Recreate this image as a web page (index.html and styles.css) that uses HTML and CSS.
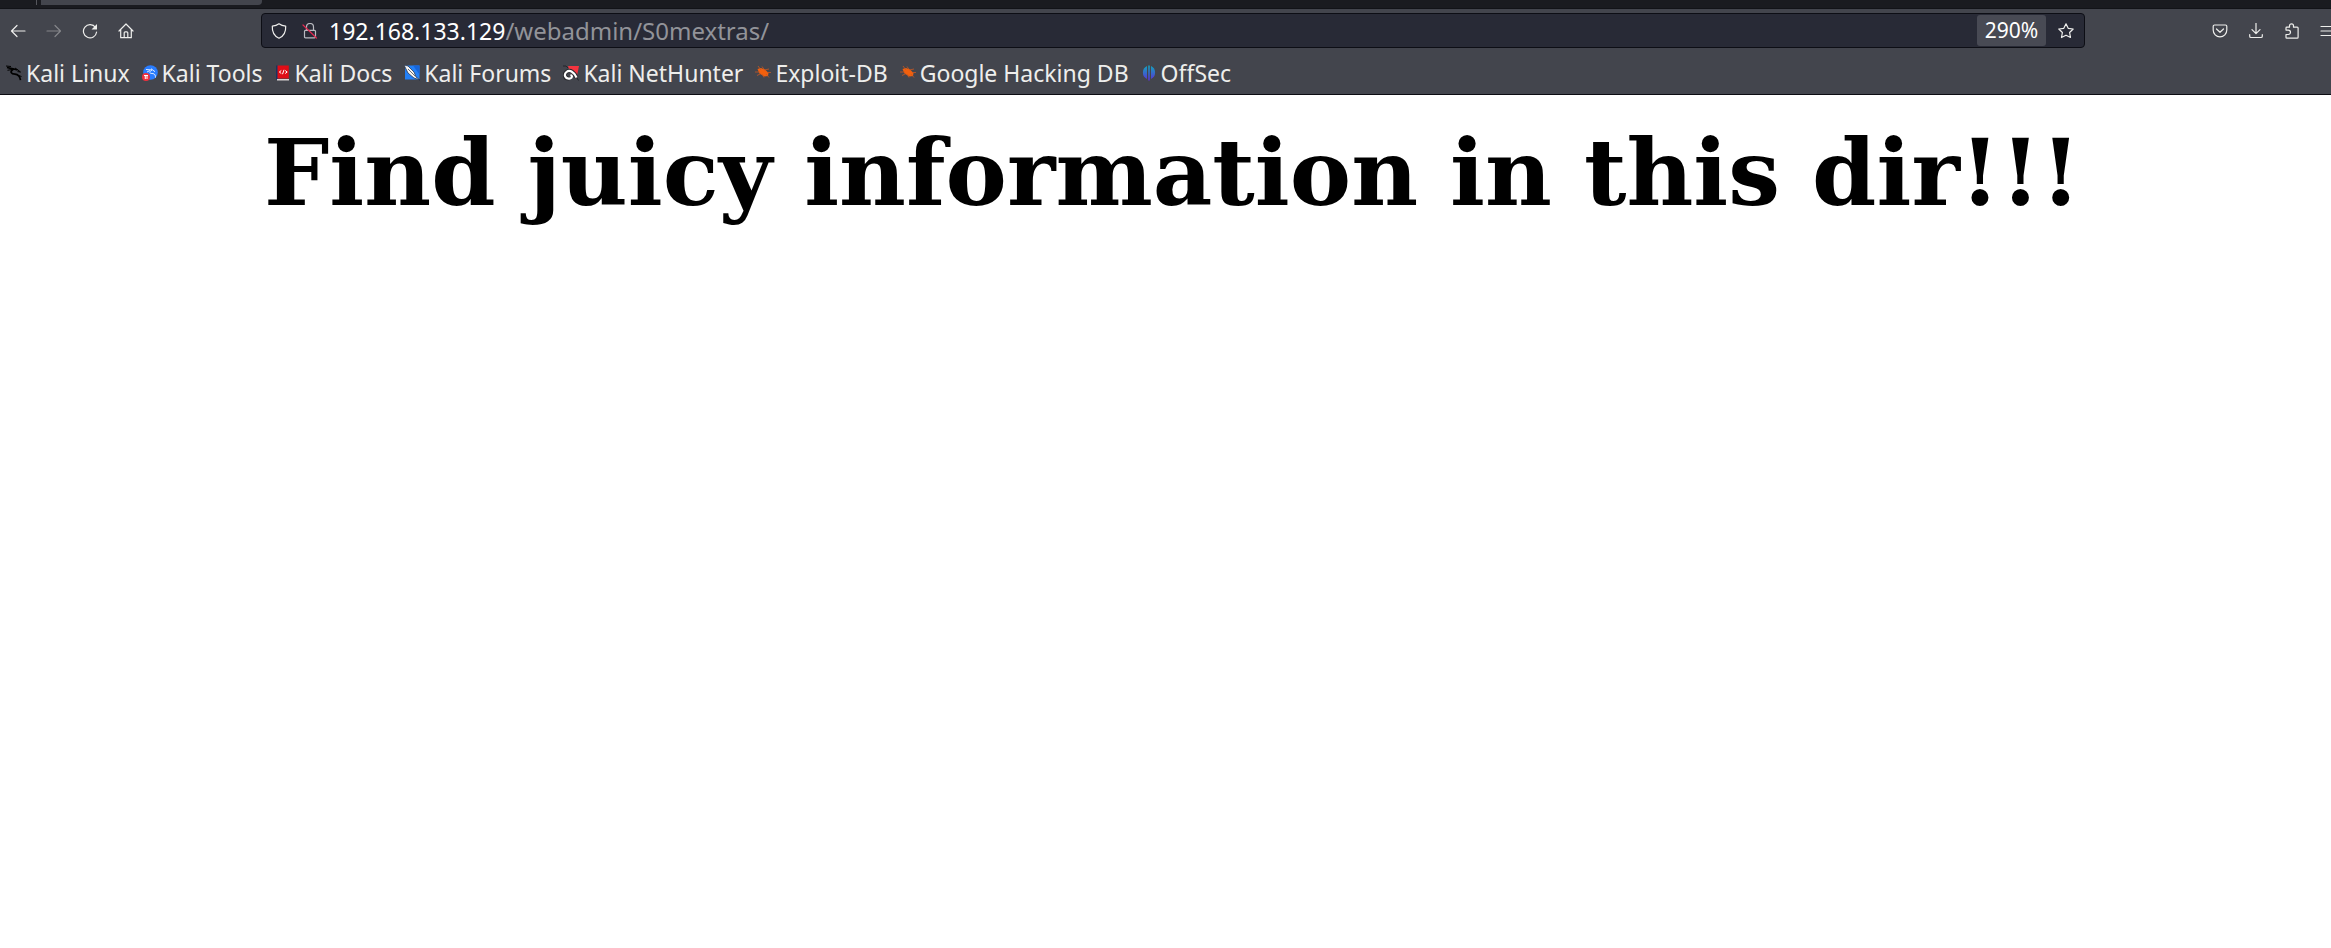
FILE: index.html
```html
<!DOCTYPE html>
<html lang="en">
<head>
<meta charset="utf-8">
<title>192.168.133.129/webadmin/S0mextras/</title>
<link rel="stylesheet" href="styles.css">
</head>
<body>
<header class="browser">
  <div class="tabstrip"><div class="tab"></div></div>
  <div class="toolbar">
    <nav class="tools" aria-label="Navigation">
      <button class="tool" aria-label="Back"><svg viewBox="0 0 16 16"><path d="M15 8H1.5M7 2.5 1.5 8 7 13.500"/></svg></button>
      <button class="tool" aria-label="Forward" disabled><svg viewBox="0 0 16 16"><path d="M1 8h13.500M9 2.500 14.500 8 9 13.500"/></svg></button>
      <button class="tool" aria-label="Reload"><svg viewBox="0 0 16 16"><path d="M13.500 4.500A6.600 6.600 0 1 0 14.600 9"/><path class="solid" d="M15 1v5.500H9.500z"/></svg></button>
      <button class="tool" aria-label="Home"><svg viewBox="0 0 16 16"><path d="M1 8 8 1l7 7M2.700 6.500v8.200h10.600V6.500M6.200 14.500V9.800q0-1 1-1h1.600q1 0 1 1v4.700"/></svg></button>
    </nav>
    <form class="urlbar">
      <button type="button" class="mark" aria-label="Tracking protection"><svg viewBox="0 0 16 16"><path d="M8 .8c2 1.500 4.200 2.200 6.700 2.400C15 9 12.500 13.200 8 15.200 3.500 13.200 1 9 1.300 3.200 3.800 3 6 2.300 8 .8z"/></svg></button>
      <button type="button" class="mark lock" aria-label="Connection not secure"><svg viewBox="0 0 16 16"><path d="M4.500 7V4a3.500 3.500 0 0 1 7 0v3M3.500 7.300h9q1 0 1 1v5.500q0 1-1 1h-9q-1 0-1-1V8.300q0-1 1-1z"/><path class="strike" d="m1 2 13.500 13"/></svg></button>
      <span class="address"><input class="host" aria-label="Host" value="192.168.133.129"><input class="path" aria-label="Path" value="/webadmin/S0mextras/"></span>
      <button type="button" class="zoom">290%</button>
      <button type="button" class="mark star" aria-label="Bookmark this page"><svg viewBox="0 0 16 16"><path d="m8 .8 2.200 4.500 5 .7-3.600 3.500.9 5L8 12.200l-4.500 2.300.9-5L.8 6l5-.7z"/></svg></button>
    </form>
    <div class="tools">
      <button class="tool" aria-label="Save to Pocket"><svg viewBox="0 0 16 16"><path d="M2.500 2h11q1.300 0 1.300 1.300V7a6.800 6.800 0 0 1-13.600 0V3.300Q1.200 2 2.500 2zM4.500 6 8 9.300 11.500 6"/></svg></button>
      <button class="tool" aria-label="Downloads"><svg viewBox="0 0 16 16"><path d="M8 .2V10.500M4 6.700l4 4 4-4M1.700 11.700v1.500q0 1.300 1.300 1.300h10q1.300 0 1.300-1.300v-1.500"/></svg></button>
      <button class="tool" aria-label="Extensions"><svg viewBox="0 0 16 16"><path d="M2 7V5q0-.8.8-.8H5.500V2.800a2 2 0 0 1 4 0v1.400H13.200q.9 0 .9.900V14.300q0 .9-.9.900H2.800q-.8 0-.8-.8V11.500h2.300a2.200 2.200 0 0 0 0-4.400H2z"/></svg></button>
      <button class="tool" aria-label="Application menu"><svg viewBox="0 0 16 16"><path d="M1 3.500h14M1 8h14M1 12.500h14"/></svg></button>
    </div>
  </div>
  <nav class="bookmarks" aria-label="Bookmarks">
    <a href="#"><svg viewBox="0 0 16 16"><g fill="none" stroke="#000"><path stroke-width="1.700" d="M1 2.500 7 3.800 11.500 5M7.500 4C3 7 5.500 9 9 9.200c4 .3 5 2.800 5.500 6"/><path d="M0 1 5 1.500M1.500 5.300 6 4.500M9 3l3 2 2.500 2-3-.4M12.500 10.500l3 1"/></g></svg>Kali Linux</a>
    <a href="#"><svg viewBox="0 0 16 16"><circle cx="8.500" cy="7.500" r="7.300" fill="#297cff"/><path d="M4 4.500 10 5c-4 2.500-2 3.600 1 3.600 2 .2 2.500 2 2.500 4M5 7l3-1.500M9 3.700l4 3" fill="none" stroke="#dceaff"/><circle cx="4" cy="12" r="4" fill="#ee303d"/><path d="M2 10.500h4M3.300 10.500v3.500M5 10.500v3.500" stroke="#fff"/></svg>Kali Tools</a>
    <a href="#"><svg viewBox="0 0 16 16"><path d="M1 .5h2v14H1z" fill="#173463"/><path d="M2.500.5h11.300v13H2.500z" fill="#e00d16"/><path d="M2 14h12v1.500H2z" fill="#d8d2d2"/><path d="M6.300 5.500 4.300 7l2 1.500M10.200 5.500l2 1.500-2 1.500M9 4.800 7.500 9.200" fill="none" stroke="#fff"/></svg>Kali Docs</a>
    <a href="#"><svg viewBox="0 0 16 16"><path d="M1 .5h14.500v14H1z" fill="#2380f7"/><path d="M9 .5h6.500v9z" fill="#1765db"/><path d="M0 0 4 1l6 6 2 5 4 3-6-2-6-5z" fill="#f5f5f5" stroke="#1c2a40" stroke-width=".7"/><path d="m4 4 7 7" stroke="#333" stroke-width=".7"/></svg>Kali Forums</a>
    <a href="#"><svg viewBox="0 0 16 16"><path d="M5 1h11l-2.500 12L7 7z" fill="#f4343f"/><path d="M0 1h3l2 2M14 13l1.500 2.500" fill="none" stroke="#24242a"/><g fill="none"><path d="M6 13.500C1 14 .5 8.500 4 6.500s7 .5 9.500 6" stroke="#29292f" stroke-width="4"/><path d="M7 13.500C2 14.500.5 9.500 3.500 7s7-.5 10 5.500M7 13.500c2.500-.5 2.500-3 .5-3.500" stroke="#fff" stroke-width="2.200"/></g></svg>Kali NetHunter</a>
    <a href="#"><svg viewBox="0 0 16 16"><path d="M2.500 4 6 3l4 1.500 3.500 3.500-.5 3-3.500.5-5-3z" fill="#f2600d"/><path d="M3 1 6 5M0 7l5 0M2 10.500l4-2M7 1.500l2.500 3.500 4.500-1M12 7.500h4M7 9l2 3.500M11 9l3 3.500" stroke="#c85823" stroke-width=".8" fill="none"/></svg>Exploit-DB</a>
    <a href="#"><svg viewBox="0 0 16 16"><path d="M2.500 4 6 3l4 1.500 3.500 3.500-.5 3-3.500.5-5-3z" fill="#f2600d"/><path d="M3 1 6 5M0 7l5 0M2 10.500l4-2M7 1.500l2.500 3.500 4.500-1M12 7.500h4M7 9l2 3.500M11 9l3 3.500" stroke="#c85823" stroke-width=".8" fill="none"/></svg>Google Hacking DB</a>
    <a href="#"><svg viewBox="0 0 16 16"><defs><linearGradient id="offsec" x2="0" y2="1"><stop stop-color="#12a5bd"/><stop offset="1" stop-color="#5a30d8"/></linearGradient></defs><path fill="url(#offsec)" d="M6 1v13A7.200 7.200 0 0 1 6 1zM7.200.5h1.600v15H7.200zM10 1a7.200 7.200 0 0 1 0 13z"/></svg>OffSec</a>
  </nav>
</header>
<main class="page"><h1>Find juicy information in this dir!!!</h1></main>
</body>
</html>
```
FILE: styles.css
```css
* { box-sizing: border-box; }
body {
  margin: 0;
  background: #fff;
  color: #000;
  font-family: "DejaVu Serif", serif;
}
button, input {
  margin: 0;
  padding: 0;
  border: 0;
  background: none;
  color: inherit;
  font: inherit;
}
.browser {
  overflow: hidden;
  background: #43454d;
  border-bottom: 1px solid #0c0c12;
  color: #eeeeec;
  font-family: "Noto Sans", sans-serif;
  font-size: 23px;
}
.tabstrip {
  height: 9px;
  padding-left: 36px;
  background: #1a1b20;
  border-bottom: 1px solid #121318;
}
.tab {
  width: 226px;
  height: 5px;
  border-left: 1px solid #55565c;
  background: linear-gradient(#43454d, #43454d) 4px 0 no-repeat;
  border-radius: 0 0 4px 0;
}
.toolbar {
  display: flex;
  align-items: center;
  height: 43px;
  margin-right: -15px;
}
.tools { display: flex; flex: none; }
.tool, .mark {
  display: flex;
  flex: none;
  align-items: center;
  justify-content: center;
  width: 36px;
  height: 32px;
}
.tool:disabled { color: #85868a; }
svg {
  flex: none;
  width: 16px;
  height: 16px;
}
.toolbar svg {
  fill: none;
  stroke: currentColor;
  stroke-width: 1.2;
  stroke-linejoin: round;
  stroke-linecap: round;
}
.toolbar .solid { fill: currentColor; stroke: none; }
.toolbar .strike { stroke: #e22850; }
.urlbar {
  display: flex;
  flex: 1;
  align-items: center;
  min-width: 0;
  height: 35px;
  margin: 0 117px;
  border: 1px solid #0d0e15;
  border-radius: 4px;
  background: #282a36;
}
.mark { width: 34px; }
.mark.lock { width: 28px; color: #b9bac0; }
.address {
  display: flex;
  flex: 1;
  align-items: baseline;
  min-width: 0;
  padding-left: 5px;
}
.address input { field-sizing: content; outline: 0; }
.host { color: #fff; }
.address .path { color: #929399; font-size: 24px; }
.zoom {
  width: 69px;
  height: 31px;
  border-radius: 3px;
  background: #484a54;
  color: #fff;
  font-size: 21px;
  line-height: 31px;
}
.mark.star { width: 38px; padding-left: 2px; }
.bookmarks {
  display: flex;
  align-items: center;
  gap: 12px;
  height: 42px;
  padding-left: 6px;
}
.bookmarks a {
  display: flex;
  align-items: center;
  gap: 4px;
  color: inherit;
  text-decoration: none;
  white-space: nowrap;
}
.page { padding: 24px 24px 24px 38px; }
h1 {
  margin: 0;
  font-size: 92px;
  line-height: 108px;
  text-align: center;
}
```
